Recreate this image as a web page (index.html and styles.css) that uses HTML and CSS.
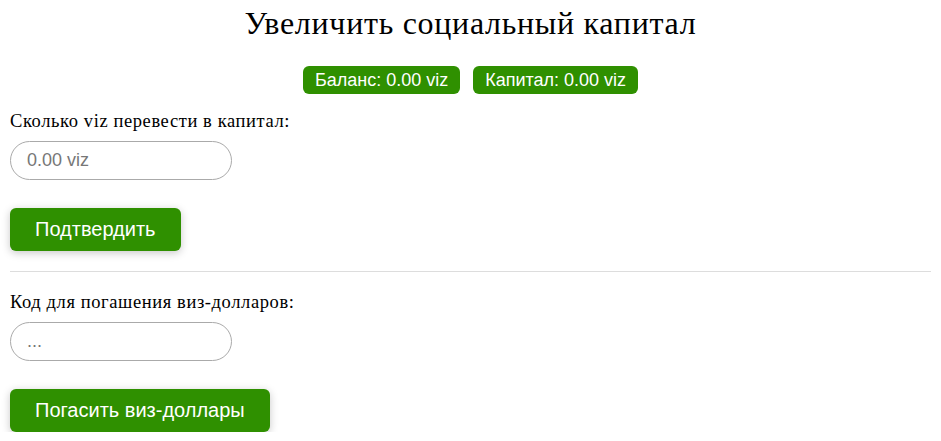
FILE: index.html
```html
<!DOCTYPE html>
<html lang="ru">
<head>
<meta charset="utf-8">
<link rel="stylesheet" href="styles.css">
</head>
<body>
<h1 class="title">Увеличить социальный капитал</h1>
<div class="badges">
  <span class="badge">Баланс: 0.00 viz</span>
  <span class="badge">Капитал: 0.00 viz</span>
</div>
<div class="form">
  <label class="label">Сколько viz перевести в капитал:</label>
  <input class="field" type="text" placeholder="0.00 viz">
  <button class="btn">Подтвердить</button>
</div>
<hr class="sep">
<div class="form second">
  <label class="label">Код для погашения виз-долларов:</label>
  <input class="field" type="text" placeholder="...">
  <button class="btn">Погасить виз-доллары</button>
</div>
</body>
</html>
```
FILE: styles.css
```css
html, body {
  margin: 0;
  background: #fff;
}
body {
  padding: 0 10px;
  font-family: "Liberation Serif", serif;
  font-size: 16px;
  color: #000;
}
.title {
  margin: 5px 0 0;
  font-size: 32px;
  font-weight: normal;
  text-align: center;
  line-height: 36px;
  letter-spacing: 0.7px;
}
.badges {
  display: flex;
  justify-content: center;
  gap: 13px;
  margin-top: 25px;
}
.badge {
  background: #2f9000;
  color: #fff;
  font-family: "Liberation Sans", sans-serif;
  font-size: 18px;
  line-height: 28px;
  padding: 0 12px;
  border-radius: 6px;
}
.form {
  display: flex;
  flex-direction: column;
  align-items: flex-start;
}
.label {
  margin-top: 17px;
  font-size: 18.5px;
  letter-spacing: 0.6px;
  line-height: 20px;
}
.second .label {
  margin-top: 20px;
}
.field {
  margin-top: 10px;
  width: 222px;
  height: 39px;
  box-sizing: border-box;
  border: 1px solid #aaa;
  border-radius: 20px;
  padding: 0 16px;
  font-family: "Liberation Sans", sans-serif;
  font-size: 18px;
  color: #333;
  background: #fff;
  outline: none;
}
.field::placeholder {
  color: #777;
}
.btn {
  margin-top: 28px;
  height: 43px;
  border: none;
  border-radius: 6px;
  background: #2f9000;
  color: #fff;
  font-family: "Liberation Sans", sans-serif;
  font-size: 20px;
  padding: 0 25px;
  box-shadow: 0 2px 8px rgba(0, 0, 0, 0.22);
}
.sep {
  margin: 20px 0 0;
  border: none;
  border-top: 1px solid #ddd;
}
```
